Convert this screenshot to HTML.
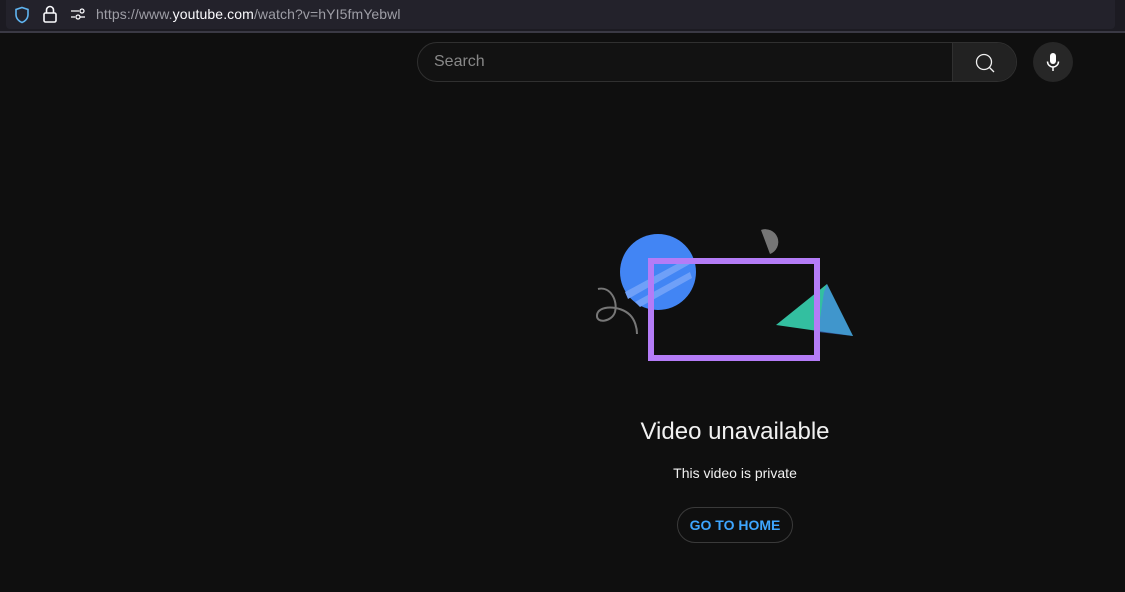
<!DOCTYPE html>
<html><head><meta charset="utf-8"><style>
*{margin:0;padding:0;box-sizing:border-box}
body{width:1125px;height:592px;background:#0f0f0f;font-family:"Liberation Sans",Roboto,sans-serif;position:relative;overflow:hidden}
.top{position:absolute;left:0;top:0;width:1125px;height:31px;background:#1c1b22}
.url{position:absolute;left:6px;top:0;width:1109px;height:29px;border-radius:0 0 4px 4px;background:#23222b}
.urltxt{position:absolute;left:96px;top:6px;font-size:14px;color:#9e9ea6;letter-spacing:0.1px}
.urltxt b{font-weight:normal;color:#fbfbfe}
.line{position:absolute;left:0;top:31px;width:1125px;height:2px;background:#3a3944}
.search{position:absolute;left:417px;top:42px;width:600px;height:40px;border:1px solid #303030;border-radius:20px;background:#121212;overflow:hidden}
.search span{position:absolute;left:16px;top:10px;font-size:16px;color:#888}
.sbtn{position:absolute;right:0;top:0;width:64px;height:40px;background:#222;border-left:1px solid #303030}
.mic{position:absolute;left:1033px;top:42px;width:40px;height:40px;border-radius:50%;background:#272727}
.t1{position:absolute;left:0;width:1470px;text-align:center;top:418px;font-size:24px;color:#f1f1f1}
.t2{position:absolute;left:0;width:1470px;text-align:center;top:465px;font-size:14px;color:#f1f1f1}
.btn{position:absolute;left:677px;top:507px;width:116px;height:36px;border:1px solid #3a3a3a;border-radius:18px;color:#3ea6ff;font-size:14px;font-weight:bold;text-align:center;line-height:34px}
</style></head><body>
<div class="top"><div class="url"></div>
<svg style="position:absolute;left:14px;top:6px" width="16" height="18" viewBox="0 0 16 18"><path d="M8 1.5 L14 3.5 V8.5 C14 12.5 11 15.5 8 16.5 C5 15.5 2 12.5 2 8.5 V3.5 Z" fill="none" stroke="#5fb4f0" stroke-width="1.6"/></svg>
<svg style="position:absolute;left:42px;top:5px" width="16" height="18" viewBox="0 0 16 18"><rect x="2" y="8" width="12" height="9" rx="1.5" fill="none" stroke="#fbfbfe" stroke-width="1.6"/><path d="M4.5 8 V5 a3.5 3.5 0 0 1 7 0 V8" fill="none" stroke="#fbfbfe" stroke-width="1.6"/></svg>
<svg style="position:absolute;left:70px;top:8px" width="16" height="12" viewBox="0 0 16 12"><path d="M1 3h8M1 9h4" stroke="#fbfbfe" stroke-width="1.3"/><circle cx="12" cy="3" r="2" fill="none" stroke="#fbfbfe" stroke-width="1.3"/><circle cx="8" cy="9" r="2" fill="none" stroke="#fbfbfe" stroke-width="1.3"/><path d="M10 9h5" stroke="#fbfbfe" stroke-width="1.3"/></svg>
<div class="urltxt">https://www.<b>youtube.com</b>/watch?v=hYI5fmYebwl</div>
</div>
<div class="line"></div>
<div class="search"><span>Search</span><div class="sbtn">
<svg style="position:absolute;left:21px;top:9px" width="22" height="22" viewBox="0 0 22 22"><circle cx="10" cy="10" r="7.5" fill="none" stroke="#f1f1f1" stroke-width="1.3"/><path d="M15.5 15.5 L20 20" stroke="#f1f1f1" stroke-width="1.3"/></svg></div></div>
<div class="mic"><svg style="position:absolute;left:10px;top:9px" width="20" height="22" viewBox="0 0 20 22"><rect x="7" y="2" width="6" height="11" rx="3" fill="#fff"/><path d="M4.5 10.5 a5.5 5.5 0 0 0 11 0" fill="none" stroke="#fff" stroke-width="1.5"/><path d="M10 16v4" stroke="#fff" stroke-width="1.5"/></svg></div>
<svg style="position:absolute;left:580px;top:220px" width="290" height="150" viewBox="0 0 290 150">
<circle cx="78" cy="52" r="38" fill="#4285f4"/>
<path d="M45 72 L108 38 L110 44 L48 79 Z M55 82 L110 52 L112 58 L60 87Z" fill="#6fa0f8"/>
<path d="M181 10 A10 10 0 0 1 190 34 Z" fill="#757575"/>
<path d="M196 105 L247 64 L273 116 Z" fill="#33bfa0"/>
<path d="M244 72 L247 64 L273 116 L238 112 Z" fill="#4a7bea" opacity="0.6"/>
<rect x="71" y="41" width="166" height="97" fill="none" stroke="#b47cf7" stroke-width="6"/>
<path d="M18 69 C30 66 38 80 35 92 C32 102 16 104 17 95 C18 85 40 85 50 95 C55 100 57 108 57 114" fill="none" stroke="#777" stroke-width="2"/>
</svg>
<div class="t1">Video unavailable</div>
<div class="t2">This video is private</div>
<div class="btn">GO TO HOME</div>
</body></html>
